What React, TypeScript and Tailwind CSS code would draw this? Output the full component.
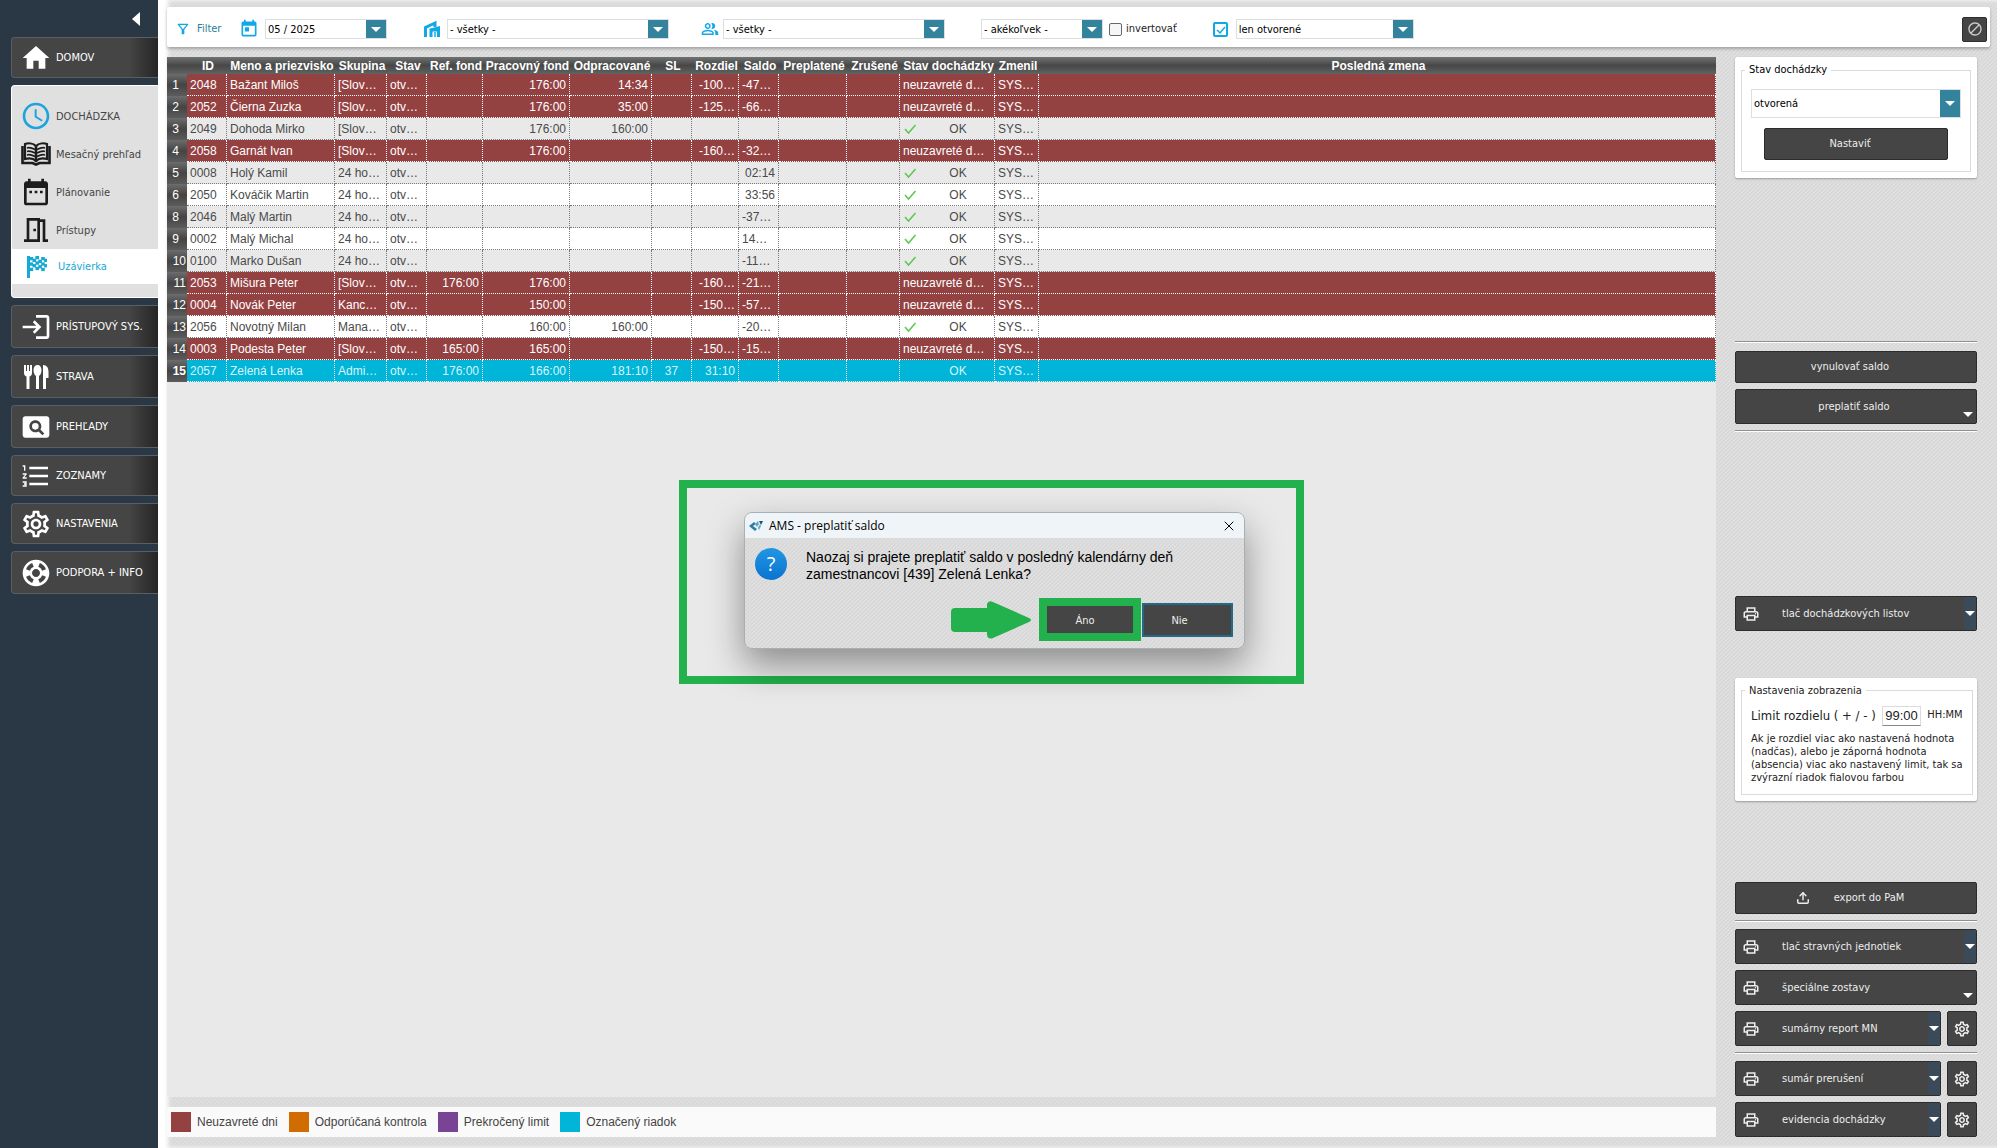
import { useState } from "react";
import type { ReactNode } from "react";
import {
  MdAccessTime,
  MdBlock,
  MdDateRange,
  MdFormatListNumbered,
  MdHome,
  MdLogin,
  MdOutlineFilterAlt,
  MdOutlineMeetingRoom,
  MdOutlinePeopleAlt,
  MdOutlinePrint,
  MdOutlineSettings,
  MdPageview,
  MdSupport,
  MdToday,
} from "react-icons/md";
import { Upload, X } from "lucide-react";

const BookIcon = () => (
  <svg viewBox="0 0 30 24" className="w-8 h-6" fill="none" stroke="currentColor">
    <path d="M15 4C12 1 7 1 4 2v15c4-1 8-1 11 2 3-3 7-3 11-2V2c-3-1-8-1-11 2z" strokeWidth="2.200" />
    <path d="M15 4v16M1.500 4v17h10l3.500 1.500 3.500-1.500h10V4" strokeWidth="2.600" />
    <path
      d="M6 6c3-1 5 0 8 1.500M6 9.500c3-1 5 0 8 1.500M6 13c3-1 5 0 8 1.500M24 6c-3-1-5 0-8 1.500M24 9.500c-3-1-5 0-8 1.500M24 13c-3-1-5 0-8 1.500"
      strokeWidth="1.800"
    />
  </svg>
);

const flagCells = [0, 1, 2, 3, 4].flatMap((row) =>
  [0, 1, 2, 3, 4, 5].filter((col) => (row + col) % 2 === 0).map((col) => ({ row, col }))
);
const flagWave = [1, 0, 0, 1, 1, 0];

const FlagIcon = () => (
  <svg viewBox="0 0 20 22" className="w-5 h-[22px]" fill="currentColor">
    <path d="M0 0h3v22H0z" />
    {flagCells.map(({ row, col }) => (
      <rect key={`${row}-${col}`} x={2.6 + col * 2.9} y={flagWave[col] + row * 2.7} width="3.600" height="3.300" />
    ))}
  </svg>
);

const CutleryIcon = () => (
  <svg viewBox="0 0 26 26" className="w-[26px] h-[26px]" fill="currentColor">
    <path d="M1 1h2v6h1V1h2v6h1V1h2v8c0 2-1 3-2.500 3.500V25h-3V12.500C2 12 1 11 1 9z" />
    <path d="M14.500 1c2.500 0 4 2 4 5s-1 5-2.500 6v13h-3V12c-1.500-1-2.500-3-2.500-6s1.500-5 4-5z" />
    <path d="M20 1c4 0 5.500 3 5.500 7v6H23v11h-3z" />
  </svg>
);

const BuildingIcon = () => (
  <svg viewBox="0 0 18 18" className="w-[18px] h-[18px]" fill="none" stroke="currentColor" strokeWidth="3">
    <path d="M2.500 17V7.500L12 3v4" />
    <path d="M8 17v-7h7.500v7" />
    <path d="M8 10l7.500-2v3" />
    <path d="M12 12v5" strokeWidth="1.500" />
  </svg>
);

const stripes =
  "bg-[linear-gradient(135deg,#d8d8d8_25%,#dfdfdf_25%,#dfdfdf_50%,#d8d8d8_50%,#d8d8d8_75%,#dfdfdf_75%)] bg-[length:4px_4px]";

type MenuItem = { label: string; icon: ReactNode; height: string };

const subItems = [
  { label: "Mesačný prehľad", icon: <BookIcon /> },
  { label: "Plánovanie", icon: <MdDateRange className="w-8 h-8" /> },
  { label: "Prístupy", icon: <MdOutlineMeetingRoom className="w-8 h-8" /> },
];

const menuItems: MenuItem[] = [
  { label: "PRÍSTUPOVÝ SYS.", icon: <MdLogin className="w-8 h-8" />, height: "h-[43px]" },
  { label: "STRAVA", icon: <CutleryIcon />, height: "h-[43px]" },
  { label: "PREHĽADY", icon: <MdPageview className="w-8 h-8" />, height: "h-[43px]" },
  { label: "ZOZNAMY", icon: <MdFormatListNumbered className="w-8 h-8" />, height: "h-[41px]" },
  { label: "NASTAVENIA", icon: <MdOutlineSettings className="w-8 h-8" />, height: "h-[41px]" },
  { label: "PODPORA + INFO", icon: <MdSupport className="w-8 h-8" />, height: "h-[43px]" },
];

const MenuButton = ({ label, icon, height }: MenuItem) => (
  <button
    className={`${height} flex shrink-0 items-center rounded-l-sm border border-r-0 border-[#5c5f61] bg-linear-to-r from-[#454545] from-80% to-[#262626] pl-1.5 text-white whitespace-nowrap`}
  >
    <span className="mr-0.5 flex w-9 shrink-0 justify-center">{icon}</span>
    <span className="pt-0.5">{label}</span>
  </button>
);

const Sidebar = () => (
  <aside className="flex w-[158px] shrink-0 flex-col bg-[#2a3744] pl-[11px]">
    <div className="flex h-[37px] shrink-0 items-center justify-end pr-[18px]">
      <button aria-label="Zbaliť menu">
        <svg viewBox="0 0 8 14" className="w-2 h-3.5" fill="#fff">
          <path d="M8 0v14L0 7z" />
        </svg>
      </button>
    </div>
    <nav className="flex flex-col gap-[7px]">
      <MenuButton label="DOMOV" icon={<MdHome className="w-8 h-8" />} height="h-[41px]" />
      <div className="flex h-[213px] flex-col rounded-l-sm border border-r-0 border-white bg-[#e0e0e0] pt-[11px] text-[#444]">
        <button className="flex h-[38px] items-center pl-1.5">
          <span className="mr-0.5 flex w-9 justify-center text-[#1ba5dc]">
            <MdAccessTime className="w-8 h-8" />
          </span>
          <span className="pt-0.5">DOCHÁDZKA</span>
        </button>
        {subItems.map((item) => (
          <button key={item.label} className="flex h-[38px] items-center pl-1.5 whitespace-nowrap">
            <span className="mr-0.5 flex w-9 shrink-0 justify-center text-[#1c1c1c]">{item.icon}</span>
            <span className="pt-0.5">{item.label}</span>
          </button>
        ))}
        <button className="flex h-[35px] items-center bg-white pl-1.5 text-[#16a9d2]">
          <span className="mr-1 flex w-9 justify-center pl-0.5">
            <FlagIcon />
          </span>
          <span className="pt-0.5">Uzávierka</span>
        </button>
      </div>
      {menuItems.map((item) => (
        <MenuButton key={item.label} {...item} />
      ))}
    </nav>
  </aside>
);

const Caret = () => (
  <svg viewBox="0 0 10 5" className="w-2.5 h-[5px]" fill="#fff">
    <path d="M0 0h10L5 5z" />
  </svg>
);

type DropdownProps = { label: string; value: string; className: string };

const Dropdown = ({ label, value, className }: DropdownProps) => (
  <div className={`${className} relative shrink-0 border border-[#dcdfe2] bg-white`}>
    <select
      aria-label={label}
      defaultValue={value}
      className="h-full w-full appearance-none bg-transparent pt-0.5 pl-0.5 text-black outline-none"
    >
      <option>{value}</option>
    </select>
    <span className="pointer-events-none absolute inset-y-0 right-0 flex w-5 items-center justify-center bg-[#34839c]">
      <Caret />
    </span>
  </div>
);

const FilterBar = () => {
  const [inverted, setInverted] = useState(false);

  return (
    <header className="mr-[7px] flex h-10 shrink-0 items-center rounded-xs bg-white pl-2 pr-[3px] pt-1 shadow-[0_2px_3px_rgba(0,0,0,0.25)]">
      <div className="flex w-16 shrink-0 items-center gap-1.5 text-[#2b8099]">
        <MdOutlineFilterAlt className="w-4 h-4 text-[#12a8e0]" />
        Filter
      </div>
      <MdToday className="mr-1.5 w-5 h-5 shrink-0 text-[#12a8e8]" />
      <Dropdown label="Obdobie" value="05 / 2025" className="mr-9 h-5 w-[122px]" />
      <span className="mr-1.5 shrink-0 text-[#12a8e8]">
        <BuildingIcon />
      </span>
      <Dropdown label="Stredisko" value="- všetky -" className="mr-8 h-5 w-[222px]" />
      <MdOutlinePeopleAlt className="mr-1 w-[18px] h-[18px] shrink-0 text-[#12a8e8]" />
      <Dropdown label="Zamestnanec" value="- všetky -" className="mr-9 h-5 w-[222px]" />
      <Dropdown label="Stav" value="- akékoľvek -" className="mr-1.5 h-5 w-[122px]" />
      <label className="mr-9 flex items-center gap-1 text-[#222]">
        <input
          type="checkbox"
          checked={inverted}
          onChange={() => setInverted(!inverted)}
          className="h-[13px] w-[13px] appearance-none rounded-xs border border-[#666] bg-[#f6f6f6]"
        />
        invertovať
      </label>
      <label className="relative mr-2 flex h-[15px] w-[15px] text-[#12a8e8]">
        <input
          type="checkbox"
          defaultChecked
          aria-label="Filtrovať otvorené"
          className="h-full w-full appearance-none rounded-xs border-2 border-current"
        />
        <svg viewBox="0 0 15 15" className="pointer-events-none absolute inset-0" fill="none" stroke="currentColor">
          <path d="M4 8l3 3 5-6" strokeWidth="1.500" />
        </svg>
      </label>
      <Dropdown label="Otvorené" value="len otvorené" className="h-5 w-[178px]" />
      <button
        aria-label="Zrušiť filter"
        className="ml-auto flex h-[25px] w-[25px] items-center justify-center rounded-xs border border-[#2e2e2e] bg-[#454545] text-[#ccc]"
      >
        <MdBlock className="w-4 h-4" />
      </button>
    </header>
  );
};

const columns = [
  { title: "ID", width: "w-[40px]", align: "" },
  { title: "Meno a priezvisko", width: "w-[108px]", align: "" },
  { title: "Skupina", width: "w-[52px]", align: "" },
  { title: "Stav", width: "w-[40px]", align: "" },
  { title: "Ref. fond", width: "w-[56px]", align: "text-right" },
  { title: "Pracovný fond", width: "w-[87px]", align: "text-right" },
  { title: "Odpracované", width: "w-[82px]", align: "text-right" },
  { title: "SL", width: "w-[40px]", align: "text-center" },
  { title: "Rozdiel", width: "w-[47px]", align: "text-right" },
  { title: "Saldo", width: "w-[40px]", align: "" },
  { title: "Preplatené", width: "w-[68px]", align: "" },
  { title: "Zrušené", width: "w-[53px]", align: "" },
  { title: "Stav dochádzky", width: "w-[95px]", align: "" },
  { title: "Zmenil", width: "w-[44px]", align: "" },
  { title: "Posledná zmena", width: "", align: "" },
];

type Row = { no: number; kind: "open" | "ok" | "selected"; cells: string[] };

// cells: id, name, group, state, ref. fund, work fund, worked, SL, difference, balance
const rows: Row[] = [
  { no: 1, kind: "open", cells: ["2048", "Bažant Miloš", "[Slov…", "otv…", "", "176:00", "14:34", "", "-100…", "-47…"] },
  { no: 2, kind: "open", cells: ["2052", "Čierna Zuzka", "[Slov…", "otv…", "", "176:00", "35:00", "", "-125…", "-66…"] },
  { no: 3, kind: "ok", cells: ["2049", "Dohoda Mirko", "[Slov…", "otv…", "", "176:00", "160:00", "", "", ""] },
  { no: 4, kind: "open", cells: ["2058", "Garnát Ivan", "[Slov…", "otv…", "", "176:00", "", "", "-160…", "-32…"] },
  { no: 5, kind: "ok", cells: ["0008", "Holý Kamil", "24 ho…", "otv…", "", "", "", "", "", "02:14"] },
  { no: 6, kind: "ok", cells: ["2050", "Kováčik Martin", "24 ho…", "otv…", "", "", "", "", "", "33:56"] },
  { no: 8, kind: "ok", cells: ["2046", "Malý Martin", "24 ho…", "otv…", "", "", "", "", "", "-37…"] },
  { no: 9, kind: "ok", cells: ["0002", "Malý Michal", "24 ho…", "otv…", "", "", "", "", "", "14…"] },
  { no: 10, kind: "ok", cells: ["0100", "Marko Dušan", "24 ho…", "otv…", "", "", "", "", "", "-11…"] },
  { no: 11, kind: "open", cells: ["2053", "Mišura Peter", "[Slov…", "otv…", "176:00", "176:00", "", "", "-160…", "-21…"] },
  { no: 12, kind: "open", cells: ["0004", "Novák Peter", "Kanc…", "otv…", "", "150:00", "", "", "-150…", "-57…"] },
  { no: 13, kind: "ok", cells: ["2056", "Novotný Milan", "Mana…", "otv…", "", "160:00", "160:00", "", "", "-20…"] },
  { no: 14, kind: "open", cells: ["0003", "Podesta Peter", "[Slov…", "otv…", "165:00", "165:00", "", "", "-150…", "-15…"] },
  { no: 15, kind: "selected", cells: ["2057", "Zelená Lenka", "Admi…", "otv…", "176:00", "166:00", "181:10", "37", "31:10", ""] },
];

const rowColor = (row: Row, index: number) => {
  if (row.kind === "open") return "bg-[#944142] text-white *:border-white";
  if (row.kind === "selected") return "bg-[#00b5d8] text-[#d8f4fa] *:border-white";
  return index % 2 === 0
    ? "bg-[#e9e9e9] text-[#4a4a4a] *:border-[#7a7a7a]"
    : "bg-white text-[#4a4a4a] *:border-[#7a7a7a]";
};

const AttendanceTable = () => (
  <table className="w-full table-fixed border-separate border-spacing-0 font-['Liberation_Sans',sans-serif] text-xs">
    <thead>
      <tr className="h-[17px] bg-linear-to-b from-[#707371] via-[#474747] to-[#5f6462] text-white">
        <th className="w-5" />
        {columns.map((column) => (
          <th key={column.title} className={`${column.width} p-0 pl-0.5 leading-4 whitespace-nowrap`}>
            {column.title}
          </th>
        ))}
      </tr>
    </thead>
    <tbody>
      {rows.map((row, index) => (
        <tr key={row.no} className={`h-[22px] ${rowColor(row, index)}`}>
          <th
            className={`bg-linear-to-b from-[#6d6d6d] via-[#444] to-[#5c5c5c] p-0 text-right text-white ${
              row.kind === "selected" ? "font-bold" : "font-normal"
            } ${row.no > 9 ? "pr-px" : "pr-2"}`}
          >
            {row.no}
          </th>
          {row.cells.map((cell, i) => (
            <td
              key={columns[i].title}
              className={`border-b border-r border-dotted px-[3px] py-0 whitespace-nowrap ${
                i === 9 && cell.includes(":") ? "text-right" : columns[i].align
              }`}
            >
              {cell}
            </td>
          ))}
          <td className="border-b border-r border-dotted p-0" />
          <td className="border-b border-r border-dotted p-0" />
          <td className="border-b border-r border-dotted px-[3px] py-0 whitespace-nowrap">
            {row.kind === "open" ? (
              "neuzavreté d…"
            ) : (
              <span className="flex items-center">
                <svg
                  viewBox="0 0 14 12"
                  className="h-3 w-3.5 shrink-0"
                  fill="none"
                  stroke={row.kind === "ok" ? "#5cc850" : "#00b5d8"}
                >
                  <path d="M2 6l3.500 4 7-8" strokeWidth="1.500" />
                </svg>
                <span className="flex-1 pl-2 text-center">OK</span>
              </span>
            )}
          </td>
          <td className="border-b border-r border-dotted px-[3px] py-0">SYS…</td>
          <td className="border-b border-r border-dotted p-0" />
        </tr>
      ))}
    </tbody>
  </table>
);

const legend = [
  { label: "Neuzavreté dni", color: "bg-[#944142]" },
  { label: "Odporúčaná kontrola", color: "bg-[#d06c00]" },
  { label: "Prekročený limit", color: "bg-[#7a4496]" },
  { label: "Označený riadok", color: "bg-[#00b5d8]" },
];

const Legend = () => (
  <footer className="mt-2.5 flex h-[30px] shrink-0 items-center gap-[11px] bg-[#fafafa] pl-1 font-['Liberation_Sans',sans-serif] text-xs text-[#444]">
    {legend.map((item) => (
      <div key={item.label} className="flex items-center gap-1.5">
        <span className={`h-5 w-5 ${item.color}`} />
        {item.label}
      </div>
    ))}
  </footer>
);

const Divider = () => <hr className="mb-px h-0.5 shrink-0 border-t border-b border-t-[#8f8f8f] border-b-white" />;

const darkButton = "rounded-xs border border-[#2c2c2c] bg-[#454545] pt-px text-[#eee]";

type PrintButtonProps = { label: string; split?: boolean };

const PrintButton = ({ label, split = true }: PrintButtonProps) => (
  <button className={`${darkButton} relative flex h-[35px] min-w-0 shrink-0 grow items-center pl-1.5 whitespace-nowrap`}>
    <MdOutlinePrint className="mr-[22px] w-[18px] h-[18px]" />
    {label}
    {split ? (
      <span className="absolute inset-y-0 right-0 flex w-3 items-center justify-center bg-[#3a4a58]">
        <Caret />
      </span>
    ) : (
      <span className="absolute bottom-1.5 right-[3px]">
        <Caret />
      </span>
    )}
  </button>
);

const PrintWithSettings = ({ label }: { label: string }) => (
  <div className="flex shrink-0 gap-1.5">
    <PrintButton label={label} />
    <button
      aria-label={`Nastavenia: ${label}`}
      className={`${darkButton} flex h-[35px] w-[30px] shrink-0 items-center justify-center`}
    >
      <MdOutlineSettings className="w-[18px] h-[18px]" />
    </button>
  </div>
);

const ActionPanel = () => (
  <aside className="flex w-[242px] shrink-0 flex-col">
    <section className="h-[121px] shrink-0 rounded-xs bg-white px-1.5 pt-1.5 shadow-[0_1px_2px_rgba(0,0,0,0.3)]">
      <fieldset className="flex h-[109px] flex-col items-center border border-[#d9dcde] px-[9px]">
        <legend className="-ml-1.5 px-1 leading-[14px] text-black">Stav dochádzky</legend>
        <Dropdown label="Stav dochádzky" value="otvorená" className="mt-3 h-[29px] w-full" />
        <button className={`${darkButton} mt-2.5 h-8 w-[184px] pr-3`}>Nastaviť</button>
      </fieldset>
    </section>

    <div className="grow-[14]" />

    <Divider />
    <button className={`${darkButton} mt-[7px] h-8 shrink-0 pr-3`}>vynulovať saldo</button>
    <button className={`${darkButton} relative mt-1.5 mb-1.5 h-[35px] shrink-0 pr-1`}>
      preplatiť saldo
      <span className="absolute bottom-1.5 right-[3px]">
        <Caret />
      </span>
    </button>
    <Divider />

    <div className="grow-[14]" />

    <div className="flex shrink-0">
      <PrintButton label="tlač dochádzkových listov" />
    </div>

    <div className="grow-[4]" />

    <section className="h-[123px] shrink-0 rounded-xs bg-white px-1.5 pt-1.5 shadow-[0_1px_2px_rgba(0,0,0,0.3)]">
      <fieldset className="h-[111px] border border-[#d9dcde] px-[9px] text-[#222]">
        <legend className="-ml-1.5 px-1 leading-[14px]">Nastavenia zobrazenia</legend>
        <div className="mt-1.5 flex h-6 items-center justify-between">
          <label htmlFor="limit" className="text-[13px] whitespace-nowrap">
            Limit rozdielu ( + / - )
          </label>
          <input
            id="limit"
            defaultValue="99:00"
            className="h-5 w-[39px] border border-[#dcdcdc] border-b-[#888] text-center font-['Liberation_Sans',sans-serif] text-[13px]"
          />
          <span>HH:MM</span>
        </div>
        <p className="mt-1 leading-[13px] whitespace-nowrap">
          Ak je rozdiel viac ako nastavená hodnota
          <br />
          (nadčas), alebo je záporná hodnota
          <br />
          (absencia) viac ako nastavený limit, tak sa
          <br />
          zvýrazní riadok fialovou farbou
        </p>
      </fieldset>
    </section>

    <div className="grow-[7]" />

    <div className="flex shrink-0 flex-col gap-1.5">
      <button className={`${darkButton} flex h-8 items-center justify-center gap-6 pr-3`}>
        <Upload className="w-3.5 h-3.5" strokeWidth={2.5} />
        export do PaM
      </button>
      <Divider />
      <div className="flex">
        <PrintButton label="tlač stravných jednotiek" />
      </div>
      <div className="flex">
        <PrintButton label="špeciálne zostavy" split={false} />
      </div>
      <PrintWithSettings label="sumárny report MN" />
      <Divider />
      <PrintWithSettings label="sumár prerušení" />
      <PrintWithSettings label="evidencia dochádzky" />
    </div>
  </aside>
);

const ConfirmDialog = () => (
  <div className="absolute left-[679px] top-[480px] h-[204px] w-[625px] border-8 border-[#22b14c] pl-[57px] pt-6">
    <div
      role="dialog"
      aria-label="AMS - preplatiť saldo"
      className={`relative flex h-[137px] w-[501px] flex-col overflow-hidden rounded-lg border border-[#a9b0b3] ${stripes}`}
    >
      <div className="flex h-[25px] shrink-0 items-center bg-[#eff4f8] pl-1 pr-[7px] font-['Open_Sans',sans-serif] text-xs text-black">
        <svg viewBox="0 0 14 12" className="mr-1.5 h-3 w-3.5">
          <path d="M0 6l5-4 2 2-3 2 4 3-2 2z" fill="#2f7fa3" />
          <path d="M6 4l3-3 1 3-2 3zM9 8l2-4 1 2-2 4z" fill="#5fa8c4" />
          <path d="M10 1l4 0-2 4z" fill="#1d4f6b" />
        </svg>
        AMS - preplatiť saldo
        <button aria-label="Zavrieť" className="ml-auto">
          <X className="h-4 w-4" strokeWidth={1.5} />
        </button>
      </div>
      <div className="flex gap-[19px] pl-2.5 pt-2.5">
        <span className="flex h-8 w-8 shrink-0 items-center justify-center rounded-full bg-linear-to-b from-[#2196e3] to-[#0a73d0] font-['Open_Sans',sans-serif] text-xl font-medium text-white">
          ?
        </span>
        <p className="pt-px font-['Liberation_Sans',sans-serif] text-sm leading-[17px] text-black">
          Naozaj si prajete preplatiť saldo v posledný kalendárny deň
          <br />
          zamestnancovi [439] Zelená Lenka?
        </p>
      </div>
      <div className="absolute right-[11px] bottom-[7px] flex items-center">
        <svg viewBox="0 0 80 38" className="mr-2 h-[38px] w-20" fill="#22b14c">
          <path d="M4 7h32V3q1-4 6-2l36 16q4 2 0 4L42 37q-5 2-6-3v-3H4q-4 0-4-4V11q0-4 4-4z" />
        </svg>
        <button className="h-[43px] w-[102px] border-8 border-[#22b14c] bg-[#454545] pt-1 pr-2.5 text-[#eee]">Áno</button>
        <button className="ml-px h-[34px] w-[91px] border-2 border-[#226a88] bg-[#454545] pt-1 pr-4 text-[#eee]">Nie</button>
      </div>
    </div>
    <div className="pointer-events-none absolute left-[57px] top-6 h-[137px] w-[501px] rounded-lg shadow-[0_16px_36px_rgba(0,0,0,0.4)]" />
  </div>
);

export default function App() {
  return (
    <div className="relative flex min-h-screen bg-white font-['DejaVu_Sans_Condensed','DejaVu_Sans',sans-serif] text-[11px]">
      <Sidebar />
      <div
        className={`ml-[5px] flex min-w-0 flex-1 flex-col gap-2.5 pb-[11px] pl-1 pt-[7px] shadow-[inset_5px_0_4px_#fff] ${stripes}`}
      >
        <FilterBar />
        <div className="flex min-h-0 flex-1 gap-[19px] pr-5">
          <main className="flex min-w-0 flex-1 flex-col">
            <div className="flex-1 bg-[#e9e9e9]">
              <AttendanceTable />
            </div>
            <Legend />
          </main>
          <ActionPanel />
        </div>
      </div>
      <ConfirmDialog />
    </div>
  );
}
